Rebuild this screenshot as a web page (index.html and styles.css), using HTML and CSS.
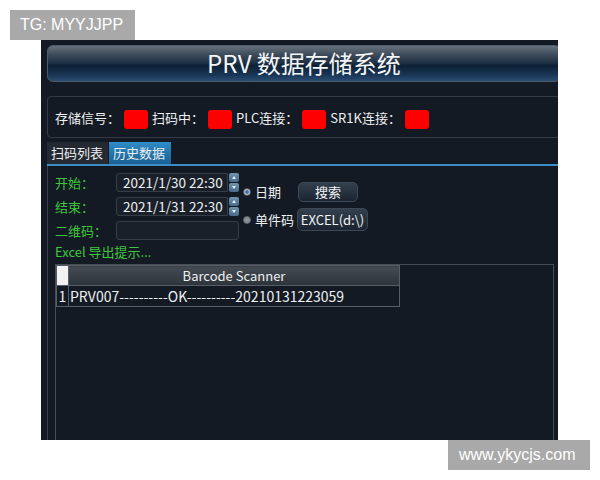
FILE: index.html
```html
<!DOCTYPE html>
<html lang="zh">
<head>
    <meta charset="UTF-8">
    <meta name="viewport" content="width=device-width, initial-scale=1.0">
    <title>PRV 数据存储系统</title>
    <link rel="stylesheet" href="styles.css">
</head>
<body>
    <div class="watermark wm-top">TG: MYYJJPP</div>

    <div class="screen">
        <div class="title-bar">PRV 数据存储系统</div>

        <div class="status">
            <span class="status-label">存储信号<b>：</b></span><span class="lamp"></span>
            <span class="status-label">扫码中<b>：</b></span><span class="lamp"></span>
            <span class="status-label">PLC连接<b>：</b></span><span class="lamp"></span>
            <span class="status-label">SR1K连接<b>：</b></span><span class="lamp"></span>
        </div>

        <div class="tabs">
            <div class="tab">扫码列表</div>
            <div class="tab active">历史数据</div>
        </div>

        <div class="panel">
            <div class="form">
                <div class="fields">
                    <div class="field">
                        <span class="label">开始<b>：</b></span>
                        <div class="input">2021/1/30 22:30</div>
                        <div class="spin"><i class="up"></i><i class="down"></i></div>
                    </div>
                    <div class="field">
                        <span class="label">结束<b>：</b></span>
                        <div class="input">2021/1/31 22:30</div>
                        <div class="spin"><i class="up"></i><i class="down"></i></div>
                    </div>
                    <div class="field">
                        <span class="label">二维码<b>：</b></span>
                        <div class="input wide"></div>
                    </div>
                </div>
                <div class="options">
                    <div class="option first">
                        <span class="radio checked">日期</span>
                        <button class="btn search">搜索</button>
                    </div>
                    <div class="option">
                        <span class="radio">单件码</span>
                        <button class="btn excel">EXCEL(d:\)</button>
                    </div>
                </div>
            </div>

            <div class="hint">Excel 导出提示...</div>

            <div class="grid-frame">
                <table class="grid">
                    <tr>
                        <th class="corner"></th>
                        <th class="col">Barcode Scanner</th>
                    </tr>
                    <tr>
                        <td class="row-no">1</td>
                        <td>PRV007----------OK----------20210131223059</td>
                    </tr>
                </table>
            </div>
        </div>
    </div>

    <div class="watermark wm-bottom">www.ykycjs.com</div>
</body>
</html>
```

FILE: styles.css
```css
body {
    margin: 0;
    background: #fff;
    font-family: "Noto Sans CJK SC", "Noto Sans", sans-serif;
    color: #eef0f2;
}
/* watermarks sit over the screenshot */
.watermark {
    position: absolute;
    background: #a9a9a9;
    color: #fff;
    font-family: "Liberation Sans", Arial, sans-serif;
    font-size: 16px;
    line-height: 30px;
    height: 30px;
    box-sizing: border-box;
}
.wm-top {
    left: 10px;
    top: 10px;
    width: 125px;
    padding-left: 10px;
}
.wm-bottom {
    left: 448px;
    top: 440px;
    width: 142px;
    padding-left: 11px;
}
.screen {
    margin: 40px 0 0 41px;
    width: 517px;
    height: 400px;
    background: #141a23;
    padding: 5px 0 0 6px;
    box-sizing: border-box;
    overflow: hidden;
    display: flex;
    flex-direction: column;
}
.title-bar {
    flex: none;
    width: 514px;
    height: 37px;
    box-sizing: border-box;
    border: 1px solid #4e5b68;
    border-radius: 6px;
    background: linear-gradient(#66717c 0%, #3d4b5a 25%, #1f3044 48%, #0d2135 56%, #173352 80%, #2a4c72 100%);
    text-align: center;
    font-size: 24px;
    line-height: 34px;
    color: #f4f6f8;
}
/* centred full-width colon, as in the original HMI font */
.status-label b,
.label b {
    font-weight: normal;
    font-family: "Noto Sans CJK TC", sans-serif;
}
.status {
    flex: none;
    width: 514px;
    height: 42px;
    margin-top: 14px;
    box-sizing: border-box;
    border: 1px solid #353b44;
    border-radius: 4px;
    display: flex;
    align-items: center;
    padding: 1px 0 0 7px;
    font-size: 13px;
}
.status-label {
    white-space: nowrap;
}
.lamp {
    width: 24px;
    height: 19px;
    margin: 3px 4px 0 4px;
    background: #ff0000;
    border-radius: 3px;
}
.tabs {
    flex: none;
    display: flex;
    margin-top: 4px;
    height: 22px;
    border-bottom: 2px solid #3b8dc6;
}
.tab {
    padding: 0 4px;
    font-size: 13px;
    line-height: 22px;
    background: #252a32;
    color: #eceef0;
    width: 53px;
}
.tab.active {
    width: 54px;
    background: linear-gradient(#2f8cc7, #1a6193);
    margin-left: 1px;
}
.panel {
    flex: 1;
    border-left: 1px solid #3a4049;
    padding: 7px 4px 0 7px;
    display: flex;
    flex-direction: column;
}
.form {
    display: flex;
}
.fields {
    display: flex;
    flex-direction: column;
    gap: 5px;
    width: 188px;
}
.field {
    display: flex;
    align-items: center;
    height: 19px;
}
.label {
    width: 61px;
    color: #3ec63e;
    font-size: 13px;
}
.input {
    width: 112px;
    height: 19px;
    box-sizing: border-box;
    border: 1px solid #363d47;
    border-radius: 3px 0 0 3px;
    background: #1a2029;
    font-size: 13.5px;
    line-height: 17px;
    padding-left: 6px;
}
.input.wide {
    width: 123px;
    border-radius: 3px;
}
.spin {
    width: 10px;
    height: 19px;
    margin-left: 1px;
    display: flex;
    flex-direction: column;
    gap: 1px;
}
.spin i {
    flex: 1;
    background: linear-gradient(#7193b0, #456a8a);
    border-radius: 2px;
    position: relative;
}
.spin i::after {
    content: "";
    position: absolute;
    left: 3px;
    top: 3px;
    border-left: 2px solid transparent;
    border-right: 2px solid transparent;
}
.spin .up::after {
    border-bottom: 3px solid #e8eef4;
}
.spin .down::after {
    border-top: 3px solid #e8eef4;
}
.options {
    margin-top: 7px;
}
.option {
    display: flex;
    align-items: center;
    height: 25px;
}
.option.first {
    height: 23px;
    margin-bottom: 4px;
}
.radio {
    width: 55px;
    font-size: 13px;
    display: flex;
    align-items: center;
}
.radio::before {
    content: "";
    width: 6px;
    height: 6px;
    border-radius: 50%;
    background: #8a9098;
    border: 1px solid #5a6068;
    margin: 0 4px 0 0;
}
.radio.checked::before {
    background: radial-gradient(#3e6fb6 35%, #b8c0cc 45%);
}
.btn {
    font-family: inherit;
    font-size: 13px;
    color: #f2f4f6;
    border: 1px solid #3c4856;
    border-radius: 5px;
    background: linear-gradient(#34404e, #1b2430);
    padding: 0;
}
.btn.search {
    width: 60px;
    height: 20px;
    line-height: 18px;
}
.btn.excel {
    width: 71px;
    height: 23px;
    margin-left: -1px;
}
.hint {
    margin-top: 4px;
    height: 16px;
    line-height: 16px;
    font-size: 13px;
    color: #3ec63e;
}
.grid-frame {
    flex: 1;
    margin-top: 4px;
    border: 1px solid #474d55;
    border-bottom: none;
}
.grid {
    border-collapse: collapse;
    font-size: 13px;
}
.grid th,
.grid td {
    border: 1px solid #575d65;
    padding: 0;
}
.grid th {
    height: 18px;
    font-weight: normal;
    background: linear-gradient(#454b53, #2d333b);
}
.grid .corner {
    width: 11px;
    background: #f2f2f2;
}
.grid .col {
    width: 330px;
}
.grid td {
    height: 20px;
    font-size: 14px;
    padding-left: 1px;
}
.grid .row-no {
    text-align: center;
    padding: 0;
}
```
